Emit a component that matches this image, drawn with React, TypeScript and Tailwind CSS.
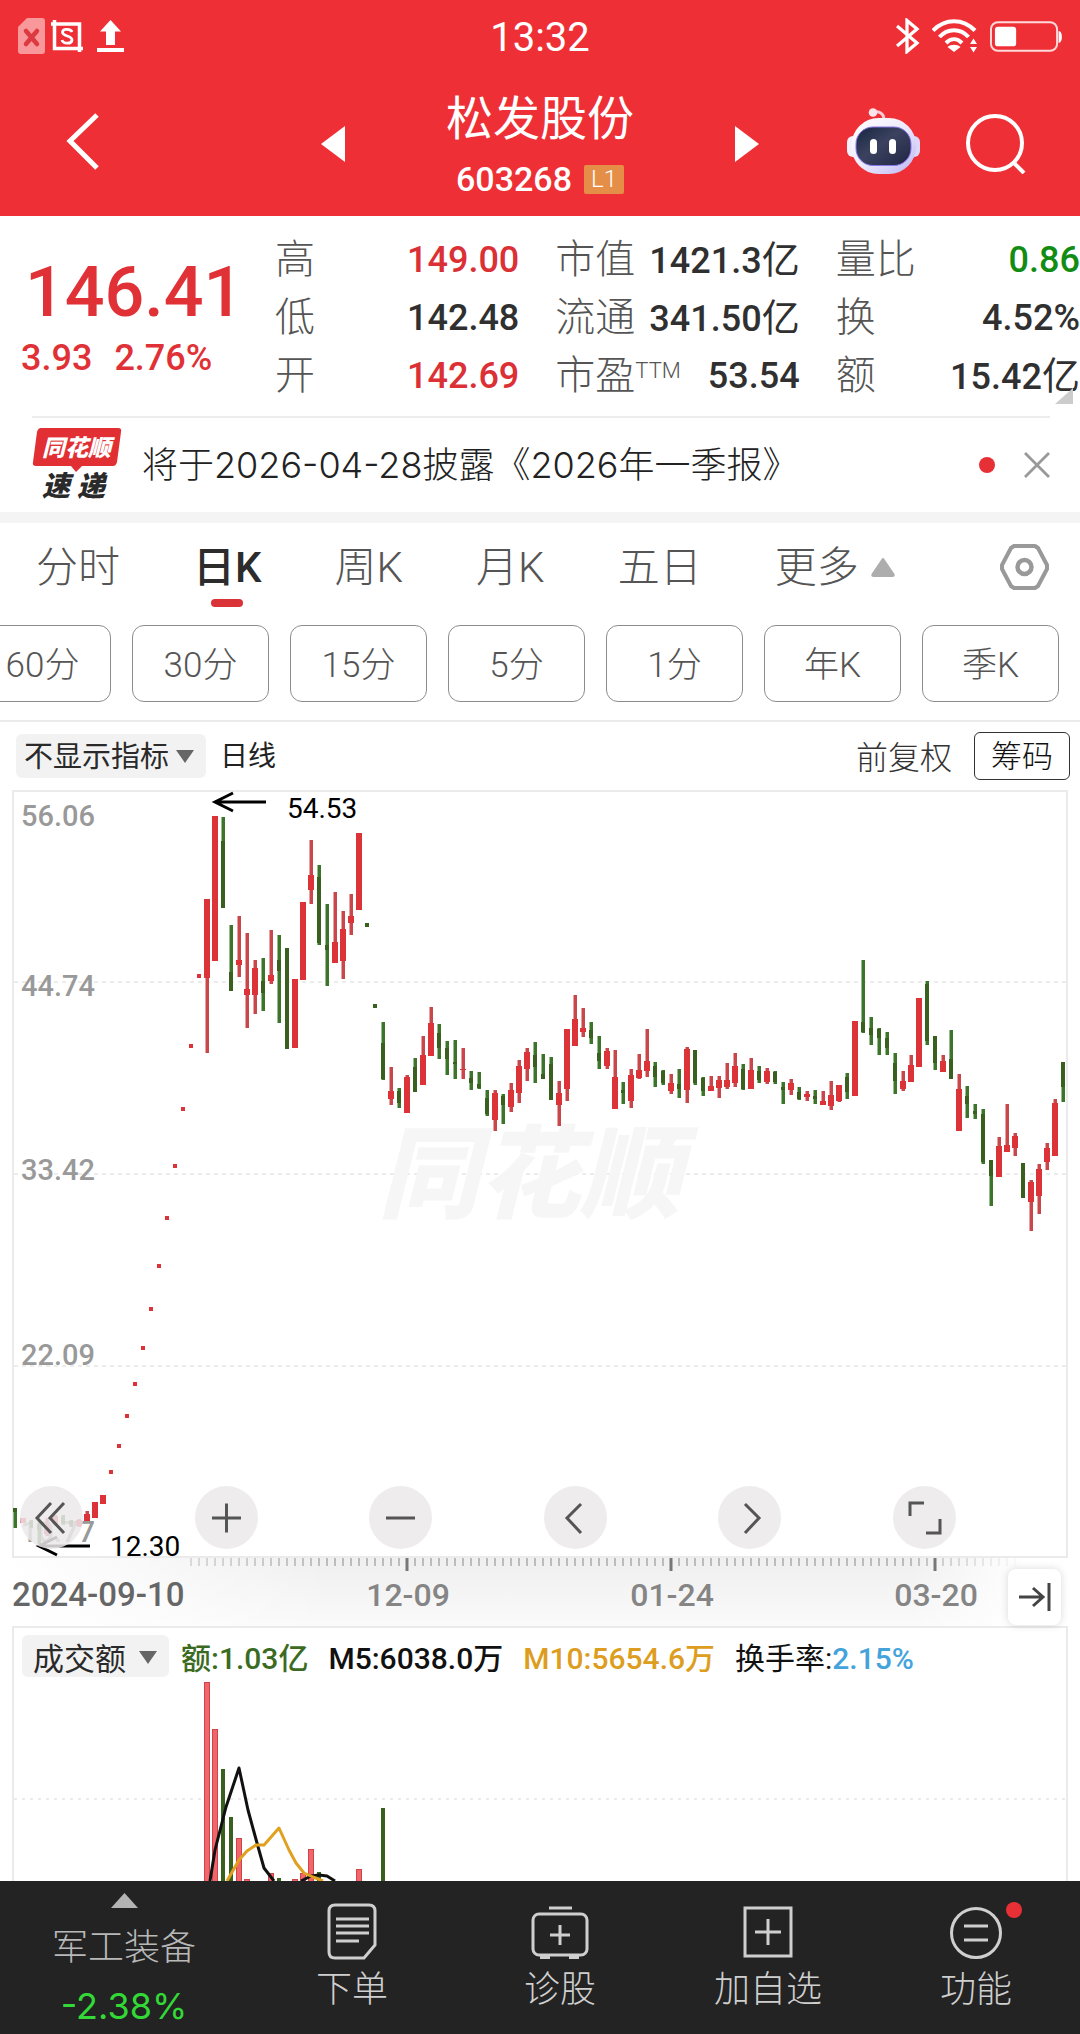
import { useState } from 'react';
import clsx from 'clsx';

type Candle = [color: 'r' | 'g', high: number, top: number, bottom: number, low: number];

const STEP = 8;
const FIRST_X = 3;

// One entry per trading day, in chart units from the top of the price panel
const candles: Candle[] = [
  ['g', 718, 718, 722, 738], ['r', 728, 728, 733, 733], ['g', 730, 732, 734, 738], ['g', 732, 734, 740, 754],
  ['r', 728, 736, 744, 746], ['r', 725, 726, 734, 736], ['g', 725, 727, 733, 735], ['g', 730, 731, 735, 737],
  ['r', 729, 730, 736, 737], ['r', 721, 724, 731, 731], ['r', 712, 712, 728, 728], ['r', 705, 705, 714, 714],
  ['r', 680, 680, 684, 684], ['r', 654, 654, 658, 658], ['r', 624, 624, 628, 628], ['r', 592, 592, 596, 596],
  ['r', 556, 556, 560, 560], ['r', 517, 517, 521, 521], ['r', 474, 474, 478, 478], ['r', 426, 426, 430, 430],
  ['r', 374, 374, 378, 378], ['r', 317, 317, 321, 321], ['r', 254, 254, 258, 258], ['r', 184, 184, 188, 188],
  ['r', 109, 109, 188, 263], ['r', 26, 26, 171, 171], ['g', 27, 51, 118, 118], ['g', 135, 182, 201, 201],
  ['r', 126, 170, 175, 187], ['r', 143, 199, 205, 238], ['r', 170, 178, 205, 224], ['g', 168, 191, 203, 221],
  ['r', 140, 185, 191, 194], ['g', 145, 170, 181, 233], ['g', 158, 158, 259, 259], ['r', 189, 189, 258, 258],
  ['r', 112, 112, 190, 190], ['r', 50, 85, 100, 114], ['g', 75, 87, 153, 155], ['g', 114, 155, 160, 196],
  ['r', 102, 152, 173, 173], ['r', 121, 139, 171, 189], ['r', 104, 126, 133, 145], ['r', 43, 43, 120, 120],
  ['g', 133, 133, 137, 137], ['g', 214, 214, 218, 218], ['g', 232, 253, 289, 290], ['r', 277, 301, 309, 315],
  ['g', 298, 301, 313, 318], ['r', 285, 287, 323, 323], ['g', 268, 277, 302, 302], ['r', 246, 265, 295, 295],
  ['r', 217, 233, 266, 266], ['g', 234, 243, 258, 269], ['g', 251, 258, 269, 285], ['g', 250, 272, 274, 289],
  ['r', 258, 279, 280, 289], ['g', 281, 288, 293, 300], ['g', 282, 294, 298, 299], ['g', 300, 308, 324, 326],
  ['r', 300, 303, 330, 341], ['g', 304, 306, 315, 334], ['r', 293, 300, 317, 322], ['r', 270, 276, 303, 313],
  ['r', 258, 262, 279, 291], ['g', 252, 265, 277, 293], ['g', 264, 284, 289, 289], ['g', 267, 274, 310, 310],
  ['r', 291, 303, 315, 336], ['r', 239, 239, 299, 311], ['r', 205, 229, 256, 256], ['r', 218, 238, 242, 247],
  ['g', 232, 240, 248, 254], ['g', 246, 263, 271, 279], ['r', 258, 261, 276, 279], ['r', 260, 287, 319, 319],
  ['g', 292, 300, 303, 314], ['r', 279, 285, 311, 318], ['r', 264, 280, 288, 289], ['r', 239, 271, 281, 287],
  ['g', 272, 276, 287, 297], ['g', 280, 281, 293, 295], ['r', 284, 293, 301, 304], ['g', 279, 294, 299, 308],
  ['r', 257, 259, 300, 313], ['g', 260, 260, 293, 295], ['g', 287, 288, 301, 306], ['r', 286, 296, 301, 301],
  ['r', 286, 290, 298, 308], ['r', 273, 290, 297, 299], ['r', 263, 276, 293, 297], ['g', 274, 279, 299, 300],
  ['r', 268, 280, 299, 299], ['g', 276, 281, 290, 293], ['r', 278, 281, 292, 294], ['g', 281, 282, 292, 294],
  ['g', 292, 297, 300, 314], ['r', 289, 293, 300, 305], ['g', 297, 302, 309, 310], ['r', 301, 304, 307, 311],
  ['g', 300, 306, 309, 314], ['r', 301, 311, 315, 315], ['r', 291, 305, 316, 320], ['r', 295, 295, 311, 312],
  ['g', 283, 287, 302, 309], ['r', 231, 231, 306, 306], ['g', 170, 232, 242, 243], ['g', 227, 238, 245, 255],
  ['g', 238, 239, 248, 265], ['g', 242, 248, 258, 265], ['g', 263, 273, 291, 304], ['r', 281, 291, 299, 301],
  ['r', 265, 275, 292, 292], ['r', 208, 208, 277, 277], ['g', 191, 194, 251, 255], ['g', 246, 246, 273, 280],
  ['r', 265, 271, 282, 282], ['g', 240, 269, 289, 289], ['r', 284, 299, 341, 341], ['g', 296, 306, 314, 328],
  ['g', 314, 321, 324, 329], ['g', 319, 324, 372, 374], ['g', 370, 370, 386, 416], ['r', 347, 356, 387, 387],
  ['r', 314, 355, 362, 362], ['r', 343, 346, 358, 366], ['g', 373, 373, 408, 408], ['r', 390, 392, 412, 441],
  ['r', 374, 379, 406, 424], ['r', 353, 358, 372, 380], ['r', 309, 313, 366, 366], ['g', 272, 272, 297, 312],
];

// [day index, colour, top of the bar]
const volumes: [number, 'r' | 'g', number][] = [
  [24, 'r', 0], [25, 'r', 47], [26, 'g', 87], [27, 'g', 135], [28, 'r', 156], [29, 'r', 197], [32, 'r', 191],
  [33, 'g', 196], [35, 'r', 197], [36, 'r', 191], [37, 'r', 167], [38, 'g', 190], [43, 'r', 187], [46, 'g', 126],
];

const quotes = [
  [
    { label: '高', value: '149.00', color: 'text-[#db3035]' },
    { label: '低', value: '142.48', color: 'text-[#303030]' },
    { label: '开', value: '142.69', color: 'text-[#db3035]' },
  ],
  [
    { label: '市值', value: '1421.3', unit: '亿', color: 'text-[#303030]' },
    { label: '流通', value: '341.50', unit: '亿', color: 'text-[#303030]' },
    { label: '市盈', note: 'TTM', value: '53.54', color: 'text-[#303030]' },
  ],
  [
    { label: '量比', value: '0.86', color: 'text-[#128c12]' },
    { label: '换', value: '4.52%', color: 'text-[#303030]' },
    { label: '额', value: '15.42', unit: '亿', color: 'text-[#303030]' },
  ],
];

const tabs = ['分时', '日K', '周K', '月K', '五日'];
const periods = ['60分', '30分', '15分', '5分', '1分', '年K', '季K'];

const chartButtons = [
  { label: '最早', d: 'M31 17 17 32l14 15M44 17 30 32l14 15' },
  { label: '放大', d: 'M17 32h29M31.500 17.500v29' },
  { label: '缩小', d: 'M17 32h29' },
  { label: '左移', d: 'M37 18 23 32l14 15' },
  { label: '右移', d: 'M27 18l14 14-14 15' },
  { label: '全屏', d: 'M17 30V17h14M47 33v14H33' },
];

const colorOf = { r: '#db3338', g: '#3a6020' };
const wickOf = { r: '#c9474b', g: '#3c7429' };

function StatusBar() {
  return (
    <div className="grid grid-cols-[1fr_auto_1fr] items-center h-[72px] px-[18px]">
      <div className="flex items-center gap-[6px]">
        <svg className="w-[27px] h-[36px]" viewBox="0 0 27 36" aria-hidden>
          <path d="M9 0h15a3 3 0 0 1 3 3v30a3 3 0 0 1-3 3H3a3 3 0 0 1-3-3V9z" fill="#f8989b" />
          <path d="m8 13 11 13M19 13 8 26" stroke="#dc3a40" strokeWidth="4.500" strokeLinecap="round" />
        </svg>
        <svg className="w-[32px] h-[34px]" viewBox="0 0 32 34" aria-hidden>
          <path d="M0 5h28.500v28M3.500 1v28.500H32" fill="none" stroke="#fff" strokeWidth="3.500" />
          <path d="M21 13c-1-3-9-4-9.500 0 0 5 9.500 3 9.500 8-.5 4.500-9 4-10 0" fill="none" stroke="#fff" strokeWidth="2.800" />
        </svg>
        <svg className="w-[27px] h-[34px] ml-2" viewBox="0 0 27 34" aria-hidden>
          <path d="M13.500 1 24 12.500h-6V26H9V12.500H3zM0 29h27v4H0z" fill="#fff" />
        </svg>
      </div>
      <span className="pt-1 text-[40px] leading-[44px]">13:32</span>
      <div className="flex items-center justify-end gap-[12px]">
        <svg className="w-[24px] h-[36px]" viewBox="0 0 24 36" fill="none" stroke="#fff" strokeWidth="3.300" aria-hidden>
          <path d="m1 8 20 17-10 8.500V2.500L21 11 1 28" />
        </svg>
        <svg className="w-[46px] h-[34px]" viewBox="0 0 46 34" fill="none" stroke="#fff" strokeWidth="4" aria-hidden>
          <path d="M1 11.500C13-1 31-1 43 11.500M7.500 18c8-9 21-9 29 0M14 24c5-5 11-5 16 0" />
          <path d="M15.500 28c3.500-3 9.500-3 13 0L22 33zM38 25l3.500-5.500L45 25zM38 28l3.500 5.500L45 28z" fill="#fff" stroke="none" />
        </svg>
        <svg className="w-[72px] h-[31px]" viewBox="0 0 73 31" aria-hidden>
          <rect x="1" y="1" width="67" height="29" rx="7" fill="none" stroke="#ffd9da" strokeWidth="2" />
          <rect x="5" y="5.500" width="21.500" height="20" rx="3" fill="#fff" />
          <path d="M69.500 10c4.500 0 4.500 12 0 12z" fill="#fff" />
        </svg>
      </div>
    </div>
  );
}

function Robot() {
  return (
    <svg className="w-[73px] h-[72px]" viewBox="0 0 73 72" aria-hidden>
      <defs>
        <linearGradient id="shell" x1="0" y1="0" x2="1" y2="1">
          <stop offset="0" stopColor="#fff" />
          <stop offset="0.500" stopColor="#eeeafc" />
          <stop offset="1" stopColor="#b9b4f2" />
        </linearGradient>
        <linearGradient id="visor" x1="0" y1="0" x2="1" y2="1">
          <stop offset="0" stopColor="#17263f" />
          <stop offset="0.450" stopColor="#3b4260" />
          <stop offset="1" stopColor="#1f2442" />
        </linearGradient>
      </defs>
      <path d="M26 4c6-1 11 1 11 8" fill="none" stroke="#f9c9d6" strokeWidth="3" />
      <circle cx="26" cy="4.500" r="4.300" fill="#fde3ea" />
      <rect x="0" y="28" width="14" height="21" rx="6" fill="#f3f0fc" />
      <rect x="59" y="28" width="14" height="21" rx="6" fill="#dcd6f8" />
      <rect x="4.500" y="10" width="64.500" height="56" rx="27" fill="url(#shell)" />
      <rect x="9" y="19" width="55" height="38.500" rx="17" fill="url(#visor)" stroke="#8877e8" strokeWidth="1" />
      <rect x="23" y="31" width="7" height="15" rx="3.500" fill="#fff" />
      <rect x="42" y="31" width="7" height="15" rx="3.500" fill="#fff" />
    </svg>
  );
}

function Header() {
  return (
    <header className="bg-[#ee3036] text-white">
      <StatusBar />
      <div className="grid grid-cols-[1fr_auto_1fr] items-center h-[144px]">
        <button aria-label="返回" className="justify-self-start ml-[64px]">
          <svg className="w-[36px] h-[64px]" viewBox="0 0 36 64" fill="none" stroke="#fff" strokeWidth="5" aria-hidden>
            <path d="M33 3 6 29l27 27" />
          </svg>
        </button>
        <div className="flex items-center">
          <button aria-label="上一只">
            <svg className="w-[24px] h-[36px]" viewBox="0 0 24 36" aria-hidden><path d="M24 0v36L0 18z" fill="#fff" /></svg>
          </button>
          <div className="w-[390px] flex flex-col items-center pt-[6px]">
            <h1 className="text-[47px] leading-[64px]">松发股份</h1>
            <div className="flex items-center gap-3 h-[56px]">
              <span className="text-[34px] font-medium">603268</span>
              <span className="bg-[#e58e48] rounded-xs px-[7px] text-[24px] leading-[29px] font-light">L1</span>
            </div>
          </div>
          <button aria-label="下一只">
            <svg className="w-[24px] h-[36px]" viewBox="0 0 24 36" aria-hidden><path d="M0 0v36l24-18z" fill="#fff" /></svg>
          </button>
        </div>
        <div className="flex items-center justify-end gap-[46px] pr-[54px]">
          <button aria-label="智能助手"><Robot /></button>
          <button aria-label="搜索">
            <svg className="w-[60px] h-[60px]" viewBox="0 0 60 60" fill="none" stroke="#fff" strokeWidth="4" aria-hidden>
              <circle cx="29" cy="29" r="27" />
              <path d="m47 48 11 11" />
            </svg>
          </button>
        </div>
      </div>
    </header>
  );
}

function Quote() {
  return (
    <section className="relative flex pt-[15px] pb-[11px]">
      <div className="w-[275px] pl-[21px] pt-[20px] text-[#e03136]">
        <div className="pl-1 text-[70px] leading-[82px] font-medium">146.41</div>
        <div className="flex gap-[22px] text-[36px] leading-[50px] font-medium">
          <span>3.93</span>
          <span>2.76%</span>
        </div>
      </div>
      <div className="flex-1 grid grid-cols-3 gap-9">
        {quotes.map((column) => (
          <dl key={column[0].label}>
            {column.map((item) => (
              <div key={item.label} className="flex items-center justify-between h-[58px] whitespace-nowrap leading-none">
                <dt className="text-[40px] font-light text-[#555]">
                  {item.label}
                  {item.note && <span className="text-[22px] align-[11px]">{item.note}</span>}
                </dt>
                <dd className={clsx('text-[36px] font-medium', item.color)}>
                  {item.value}
                  {item.unit && <span className="text-[38px] font-normal">{item.unit}</span>}
                </dd>
              </div>
            ))}
          </dl>
        ))}
      </div>
      <svg className="absolute right-[7px] bottom-[12px] w-[18px] h-[16px]" viewBox="0 0 18 16" aria-hidden>
        <path d="M18 0v16H0z" fill="#ccc" />
      </svg>
    </section>
  );
}

function Notice() {
  return (
    <section className="flex items-center h-[96px] ml-8 mr-[30px] border-t-2 border-[#ededed]">
      <svg className="w-[90px] h-[80px] overflow-visible" viewBox="0 -3 90 80" role="img" aria-label="同花顺速递">
        <path d="M9 0h77q4 0 3 4l-4 30q-1 4-4 4H50l-6 6-5-6H4q-4 0-3-4L5 4q1-4 4-4z" fill="#e22f34" />
        <text x="10" y="28" fill="#fff" className="text-[23px] font-black italic">同花顺</text>
        <text x="10" y="68" fill="#2a2a2a" className="text-[28px] font-black italic">速</text>
        <text x="45" y="68" fill="#2a2a2a" className="text-[28px] font-black italic">递</text>
      </svg>
      <a href="#notice" className="flex-1 ml-[20px] text-[36px] font-light text-[#222] font-['Inter','Noto_Sans_CJK_SC',sans-serif]">
        将于2026-04-28披露《2026年一季报》
      </a>
      <span className="size-4 rounded-full bg-[#e63035]" />
      <button aria-label="关闭" className="ml-[29px]">
        <svg className="size-[26px]" viewBox="0 0 26 26" stroke="#999" strokeWidth="2.800" aria-hidden>
          <path d="m1 1 24 24M25 1 1 25" />
        </svg>
      </button>
    </section>
  );
}

function Tabs() {
  const [active, setActive] = useState('日K');

  return (
    <section className="border-t-[11px] border-[#f5f4f5] overflow-hidden">
      <div className="flex items-center gap-[73px] h-[88px] pl-9 pr-[31px] text-[42px] font-light text-[#555]">
        {tabs.map((tab) => (
          <button
            key={tab}
            onClick={() => setActive(tab)}
            className={clsx('relative h-full whitespace-nowrap', active === tab && 'font-medium text-[#2c2c2c]')}
          >
            {tab}
            {active === tab && (
              <span className="absolute bottom-1 left-1/2 -translate-x-1/2 w-8 h-2 rounded-full bg-[#d93237]" />
            )}
          </button>
        ))}
        <button className="flex items-center gap-3 whitespace-nowrap">
          更多
          <svg className="w-[24px] h-[19px]" viewBox="0 0 24 19" aria-hidden>
            <path d="M12 0q1 0 2 2l9.500 14q1 3-2 3h-19q-3 0-2-3L10 2q1-2 2-2z" fill="#adadad" />
          </svg>
        </button>
        <button aria-label="设置" className="ml-auto">
          <svg className="w-[49px] h-[48px]" viewBox="0 0 49 48" fill="none" stroke="#999" aria-hidden>
            <path d="M14 3h21l3 2 9 17v4l-9 17-3 2H14l-3-2-9-17v-4l9-17z" strokeWidth="4" strokeLinejoin="round" />
            <circle cx="24.500" cy="24" r="7" strokeWidth="4.500" />
          </svg>
        </button>
      </div>
      <div className="flex gap-[21px] -ml-[26px] pr-[21px] pt-[14px] pb-[18px] border-b-2 border-[#ebebeb]">
        {periods.map((period) => (
          <button
            key={period}
            className="flex-1 h-[77px] pt-[6px] rounded-xl border border-[#8c8c8c] text-[35px] font-light text-[#555] whitespace-nowrap"
          >
            {period}
          </button>
        ))}
      </div>
    </section>
  );
}

function Picker({ label, value, className }: { label: string; value: string; className: string }) {
  return (
    <div className="relative">
      <select aria-label={label} className={clsx('appearance-none rounded-md bg-[#f2f2f2] pt-[2px] text-[#2a2a2a]', className)}>
        <option>{value}</option>
      </select>
      <svg className="absolute right-3 top-4 w-[18px] h-[13px] pointer-events-none" viewBox="0 0 18 13" aria-hidden>
        <path d="M0 0h18l-9 13z" fill="#666" />
      </svg>
    </div>
  );
}

function PriceChart() {
  return (
    <section>
      <div className="flex items-center h-[68px] pl-4 pr-[10px]">
        <Picker label="指标" value="不显示指标" className="w-[190px] h-[44px] pl-2 text-[29px]" />
        <span className="ml-[14px] pt-[2px] text-[28px] text-[#222]">日线</span>
        <span className="ml-auto pt-1 text-[32px] font-light text-[#333]">前复权</span>
        <button className="ml-[22px] w-[96px] h-[48px] pt-[2px] rounded-md border border-[#333] text-[31px] leading-[44px] font-light text-[#111]">筹码</button>
      </div>
      <div className="relative mx-3">
        <svg className="block w-full overflow-visible" viewBox="0 0 1056 768" role="img" aria-label="日K线图">
          <rect x="1" y="1" width="1054" height="766" fill="none" stroke="#ebebeb" strokeWidth="2" />
          {[192, 384, 576].map((y) => (
            <line key={y} x1="2" x2="1054" y1={y} y2={y} stroke="#e6e6e6" strokeWidth="1.500" strokeDasharray="4 4" />
          ))}
          <text x="366" y="420" fill="#f6f6f6" className="text-[101px] font-black italic">同花顺</text>
          <g fill="#999" className="text-[29px] font-medium">
            <text x="9" y="36">56.06</text>
            <text x="9" y="206">44.74</text>
            <text x="9" y="390">33.42</text>
            <text x="9" y="575">22.09</text>
            <text x="9" y="752">10.77</text>
          </g>
          {candles.map(([color, high, top, bottom, low], i) => {
            const x = FIRST_X + i * STEP;
            const dot = low - high === 4;
            const body = color === 'r' && !dot ? 6 : 4;
            return (
              <g key={i}>
                <rect x={x - 1.5} y={high} width="3.500" height={low - high} fill={wickOf[color]} />
                <rect x={x - body / 2} y={top} width={body} height={bottom - top} fill={colorOf[color]} />
              </g>
            );
          })}
          <g fill="none" stroke="#000" strokeWidth="3">
            <path d="M254 12h-50M221 3l-18 9 18 9" />
            <path d="M78 756H28M45 747l-18 9 18 9" />
          </g>
          <g className="text-[28px]">
            <text x="275" y="28">54.53</text>
            <text x="98" y="766">12.30</text>
          </g>
        </svg>
        <div className="absolute left-2 right-28 bottom-[9px] flex justify-between">
          {chartButtons.map((button) => (
            <button key={button.label} aria-label={button.label} className="size-[63px] rounded-full bg-[#ece9eb]/85">
              <svg className="size-[63px]" viewBox="0 0 63 63" fill="none" stroke="#555" strokeWidth="3" aria-hidden>
                <path d={button.d} />
              </svg>
            </button>
          ))}
        </div>
      </div>
    </section>
  );
}

function TimeAxis() {
  const ticks = Array.from({ length: 104 }, (_, i) => 179 + i * STEP);

  return (
    <div className="relative mx-3">
      <svg className="block w-full" viewBox="0 0 1056 68" role="img" aria-label="时间轴">
        <defs>
          <linearGradient id="axis" x1="0" y1="0" x2="0" y2="1">
            <stop offset="0" stopColor="#efefef" />
            <stop offset="1" stopColor="#fafafa" />
          </linearGradient>
          <linearGradient id="fade" x1="0" y1="0" x2="1" y2="0">
            <stop offset="0" stopColor="#fff" />
            <stop offset="0.300" stopColor="#fff" stopOpacity="0" />
            <stop offset="0.850" stopColor="#fff" stopOpacity="0" />
            <stop offset="0.960" stopColor="#fff" />
          </linearGradient>
        </defs>
        <rect width="1056" height="68" fill="url(#axis)" />
        {ticks.map((x) => (
          <line key={x} x1={x} x2={x} y1="0" y2="8" stroke="#888" strokeWidth="1" />
        ))}
        <rect width="1056" height="68" fill="url(#fade)" />
        {[395, 659, 923].map((x) => (
          <line key={x} x1={x} x2={x} y1="0" y2="13" stroke="#777" strokeWidth="3" />
        ))}
        <g fill="#858585" className="text-[32px] font-medium">
          <text x="0" y="48" fill="#666" className="text-[33px]">2024-09-10</text>
          <text x="396" y="48" textAnchor="middle">12-09</text>
          <text x="660" y="48" textAnchor="middle">01-24</text>
          <text x="924" y="48" textAnchor="middle">03-20</text>
        </g>
      </svg>
      <button
        aria-label="最新"
        className="absolute right-[7px] top-[11px] w-[53px] h-[56px] rounded-lg bg-white shadow-[0_0_8px_rgba(0,0,0,0.15)] flex items-center justify-center"
      >
        <svg className="w-[32px] h-[28px]" viewBox="0 0 32 28" fill="none" stroke="#444" strokeWidth="3" aria-hidden>
          <path d="M0 14h24M14 5l10 9-10 9M30 0v28" />
        </svg>
      </button>
    </div>
  );
}

function VolumePanel() {
  return (
    <section className="mx-3 border-2 border-b-0 border-[#ebebeb]">
      <div className="flex items-center h-[54px] pt-[6px] pl-2 text-[30px] font-medium whitespace-nowrap">
        <Picker label="副图指标" value="成交额" className="w-[147px] h-[42px] pl-[11px] text-[31px] font-normal" />
        <span className="ml-3 text-[#3b6b22]">额:1.03亿</span>
        <span className="ml-5 text-[#111]">M5:6038.0万</span>
        <span className="ml-5 text-[#dd9d20]">M10:5654.6万</span>
        <span className="ml-5 font-normal text-[#111]">换手率:</span>
        <span className="text-[#45a3dc]">2.15%</span>
      </div>
      <svg className="block w-full" viewBox="2 0 1052 199" role="img" aria-label="成交额">
        <line x1="2" x2="1054" y1="117" y2="117" stroke="#e6e6e6" strokeWidth="1.500" strokeDasharray="3 5" />
        {volumes.map(([i, color, y]) => {
          const x = FIRST_X + i * STEP;
          return color === 'r' ? (
            <rect key={i} x={x - 2.5} y={y + 0.5} width="5" height="210" fill="#f0666a" stroke="#cf4448" />
          ) : (
            <rect key={i} x={x - 2} y={y} width="4" height="210" fill="#3a6020" />
          );
        })}
        <g fill="none" strokeWidth="3" strokeLinejoin="round">
          <path d="M198 199l5-31 11-43 13-39 9 42 9 33 7 25 10 13M289 199l10-5 8-1 8 1 8 5" stroke="#111" />
          <path d="M215 199l12-21 8-9 9-6h8l15-17 10 22 7 13 8 10 9 4 10 4" stroke="#e0a020" />
        </g>
      </svg>
    </section>
  );
}

const actions = [
  {
    label: '下单',
    icon: (
      <>
        <path d="M13 3h34q6 0 6 6v34L42 56H13q-6 0-6-6V9q0-6 6-6z" />
        <path d="M14 17h33M14 24h33M14 31h33M14 39h23" />
      </>
    ),
  },
  {
    label: '诊股',
    icon: (
      <>
        <path d="M19 6h23" />
        <rect x="3" y="12" width="54" height="41" rx="6" />
        <path d="M10 55.500h10M39 55.500h10M30 23v20M20 33h20" />
      </>
    ),
  },
  {
    label: '加自选',
    icon: <path d="M7 6h46v48H7zM30 17v26M17 30h26" />,
  },
  {
    label: '功能',
    icon: (
      <>
        <circle cx="30" cy="31" r="24.500" />
        <path d="M18 24h24M18 38h24" />
      </>
    ),
  },
];

function BottomBar() {
  return (
    <nav className="flex h-[153px] bg-[#232323] text-[#cfcfcf]">
      <a href="#sector" className="w-[248px] flex flex-col items-center pt-3">
        <svg className="w-[27px] h-[15px]" viewBox="0 0 27 15" aria-hidden><path d="M13.500 0 27 15H0z" fill="#b4b4b4" /></svg>
        <span className="mt-[14px] text-[36px] leading-[52px] font-light text-[#b8b8b8]">军工装备</span>
        <span className="mt-[10px] text-[36px] leading-[44px] text-[#33d936] font-['Inter',sans-serif]">-2.38%</span>
      </a>
      {actions.map((action) => (
        <a key={action.label} href="#" className="flex-1 flex flex-col items-center pt-[21px]">
          <span className="relative">
            <svg className="size-[60px]" viewBox="0 0 60 60" fill="none" stroke="#cfcfcf" strokeWidth="3" aria-hidden>
              {action.icon}
            </svg>
            {action.label === '功能' && <span className="absolute -right-4 top-0 size-4 rounded-full bg-[#e63035]" />}
          </span>
          <span className="mt-[2px] text-[36px] leading-[52px] font-light">{action.label}</span>
        </a>
      ))}
    </nav>
  );
}

export default function App() {
  return (
    <div lang="zh-CN" className="w-full overflow-hidden bg-white font-['Roboto','Noto_Sans_CJK_SC',sans-serif]">
      <Header />
      <main>
        <Quote />
        <Notice />
        <Tabs />
        <PriceChart />
        <TimeAxis />
        <VolumePanel />
      </main>
      <BottomBar />
    </div>
  );
}
